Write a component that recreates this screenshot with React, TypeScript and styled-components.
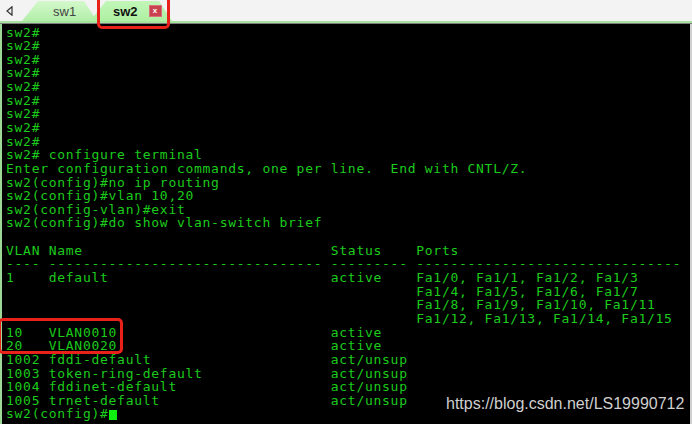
import React from "react";
import styled, { createGlobalStyle } from "styled-components";

const GlobalStyle = createGlobalStyle`
  html, body { margin: 0; padding: 0; background: #f2f2f2; }
  #root { width: 692px; height: 424px; }
`;

const Window = styled.div`
  position: relative;
  width: 692px;
  height: 424px;
  overflow: hidden;
  display: flex;
  flex-direction: column;
  background: #f2f2f2;
`;

const TabBar = styled.div`
  height: 21px;
  display: flex;
  align-items: flex-end;
  background: #f3f3f3;
`;

const ArrowButton = styled.div`
  width: 22px;
  height: 21px;
  display: flex;
  align-items: center;
  justify-content: flex-start;
  padding-left: 6px;
  box-sizing: border-box;
`;

const Tab = styled.div<{ $active?: boolean; $width: number; $pad: number; $overlap?: number }>`
  width: ${(p) => p.$width}px;
  height: 20px;
  margin-left: ${(p) => -(p.$overlap || 0)}px;
  box-sizing: border-box;
  padding-left: ${(p) => p.$pad}px;
  display: flex;
  align-items: center;
  gap: 11px;
  clip-path: polygon(0 100%, 16px 0, calc(100% - 13px) 0, 100% 100%);
  background: ${(p) =>
    p.$active
      ? "linear-gradient(#c2f6b8, #aef0a2)"
      : "linear-gradient(#d4f8cc, #b2eea8)"};
  font-family: "Liberation Sans", Arial, sans-serif;
  font-size: 13px;
  font-weight: ${(p) => (p.$active ? 700 : 400)};
  color: ${(p) => (p.$active ? "#111" : "#444")};
  z-index: ${(p) => (p.$active ? 2 : 1)};
`;

const TabLabel = styled.span`
  line-height: 14px;
  padding-top: 2px;
`;

const CloseBox = styled.span`
  width: 13px;
  height: 12px;
  background: #c8434f;
  border: 1px solid #d9707a;
  box-sizing: border-box;
  color: #fff;
  font-size: 8px;
  line-height: 10px;
  text-align: center;
  font-weight: 700;
`;

const GreenRule = styled.div`
  height: 2px;
  background: #a6e49e;
`;

const GrayRule = styled.div`
  height: 1px;
  background: #7c7c7c;
`;

const Terminal = styled.div`
  flex: 1;
  background: #000;
  border-left: 2px solid #9ed896;
  border-right: 2px solid #d0d0d0;
  padding: 1.5px 0 0 4px;
  font-family: "DejaVu Sans Mono", monospace;
  font-size: 13px;
  letter-spacing: 0.72px;
  line-height: 13.65px;
  color: #1ccb1c;
`;

const Line = styled.div`
  white-space: pre;
  height: 13.65px;
`;

const Cursor = styled.span`
  display: inline-block;
  width: 8.5px;
  height: 10px;
  background: #10f010;
  vertical-align: -1.5px;
`;

const Annotation = styled.div<{ $l: number; $t: number; $w: number; $h: number }>`
  position: absolute;
  left: ${(p) => p.$l}px;
  top: ${(p) => p.$t}px;
  width: ${(p) => p.$w}px;
  height: ${(p) => p.$h}px;
  border: 3px solid #e8221a;
  border-radius: 5px;
  box-sizing: border-box;
  z-index: 5;
`;

const Watermark = styled.div`
  position: absolute;
  left: 446px;
  top: 396px;
  font-family: "Liberation Sans", Arial, sans-serif;
  font-size: 16px;
  line-height: 16px;
  color: #cfcfcf;
  white-space: nowrap;
`;

const lines: string[] = [
  "sw2#",
  "sw2#",
  "sw2#",
  "sw2#",
  "sw2#",
  "sw2#",
  "sw2#",
  "sw2#",
  "sw2#",
  "sw2# configure terminal",
  "Enter configuration commands, one per line.  End with CNTL/Z.",
  "sw2(config)#no ip routing",
  "sw2(config)#vlan 10,20",
  "sw2(config-vlan)#exit",
  "sw2(config)#do show vlan-switch brief",
  "",
  "VLAN Name                             Status    Ports",
  "---- -------------------------------- --------- -------------------------------",
  "1    default                          active    Fa1/0, Fa1/1, Fa1/2, Fa1/3",
  "                                                Fa1/4, Fa1/5, Fa1/6, Fa1/7",
  "                                                Fa1/8, Fa1/9, Fa1/10, Fa1/11",
  "                                                Fa1/12, Fa1/13, Fa1/14, Fa1/15",
  "10   VLAN0010                         active",
  "20   VLAN0020                         active",
  "1002 fddi-default                     act/unsup",
  "1003 token-ring-default               act/unsup",
  "1004 fddinet-default                  act/unsup",
  "1005 trnet-default                    act/unsup",
];

export default function App() {
  return (
    <>
      <GlobalStyle />
      <Window>
        <TabBar>
          <ArrowButton>
            <svg width="7" height="10" viewBox="0 0 7 10">
              <path d="M6 0.8 L1 5 L6 9.2 Z" fill="none" stroke="#333" strokeWidth="1.2" />
            </svg>
          </ArrowButton>
          <Tab $width={75} $pad={31}>
            <TabLabel>sw1</TabLabel>
          </Tab>
          <Tab $active $width={82} $pad={23} $overlap={7}>
            <TabLabel>sw2</TabLabel>
            <CloseBox>x</CloseBox>
          </Tab>
        </TabBar>
        <GreenRule />
        <GrayRule />
        <Terminal>
          {lines.map((l, i) => (
            <Line key={i}>{l}</Line>
          ))}
          <Line>
            sw2(config)#<Cursor />
          </Line>
        </Terminal>
        <Annotation $l={97} $t={-4} $w={73} $h={33} />
        <Annotation $l={-2} $t={318} $w={125} $h={36} />
        <Watermark>https://blog.csdn.net/LS19990712</Watermark>
      </Window>
    </>
  );
}
